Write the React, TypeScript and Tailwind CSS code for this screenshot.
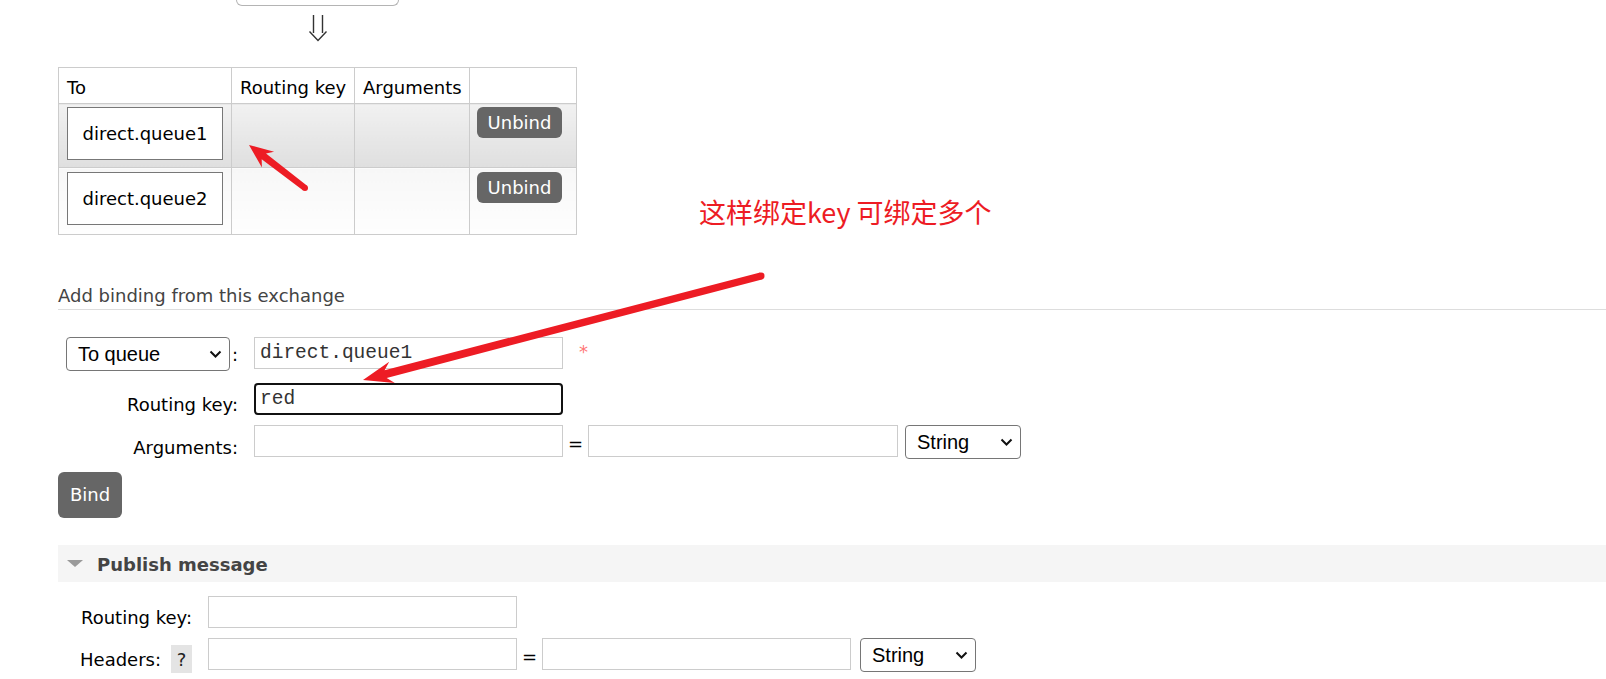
import React from 'react';

// annotation arrow: tapered shaft plus a notched head, as a polygon
function arrowPoints(tx: number, ty: number, px: number, py: number, headL: number, headW: number, tailW: number, neckW: number) {
  const dx = px - tx;
  const dy = py - ty;
  const len = Math.hypot(dx, dy);
  const ux = dx / len;
  const uy = dy / len;
  const nx = -uy;
  const ny = ux;
  const bx = px - ux * headL;
  const by = py - uy * headL;
  const kx = px - ux * headL * 0.78;
  const ky = py - uy * headL * 0.78;
  const pts = [
    [tx + nx * tailW, ty + ny * tailW],
    [kx + nx * neckW, ky + ny * neckW],
    [bx + nx * headW, by + ny * headW],
    [px, py],
    [bx - nx * headW, by - ny * headW],
    [kx - nx * neckW, ky - ny * neckW],
    [tx - nx * tailW, ty - ny * tailW],
  ];
  return pts.map((p) => p[0].toFixed(1) + ',' + p[1].toFixed(1)).join(' ');
}

function Chevron() {
  return (
    <svg width="13" height="8" viewBox="0 0 13 8">
      <path d="M1.5 1.5l5 5 5-5" fill="none" stroke="#111" strokeWidth="2" />
    </svg>
  );
}

function FakeSelect({ label, className }: { label: string; className: string }) {
  return (
    <div
      className={
        "flex h-[34px] items-center justify-between rounded-[4px] border border-[#767676] bg-white pl-[11px] pr-[7px] font-['Liberation_Sans',Arial,sans-serif] text-[20px] text-black " +
        className
      }
    >
      <span>{label}</span>
      <Chevron />
    </div>
  );
}

function TextBox({ value, className }: { value?: string; className: string }) {
  return (
    <input
      readOnly
      value={value || ''}
      className={
        "h-[32px] border border-[#cccccc] bg-white px-[5px] font-['Liberation_Mono','Courier_New',monospace] text-[19.5px] text-[#333] outline-none " +
        className
      }
    />
  );
}

function QueueCell({ name }: { name: string }) {
  return (
    <div className="flex h-[53px] w-[156px] items-center justify-center border border-[#777] bg-white">
      {name}
    </div>
  );
}

function UnbindButton() {
  return (
    <button className="flex h-[31px] w-[85px] items-center justify-center rounded-[6px] bg-[#666] text-white">
      Unbind
    </button>
  );
}

export default function App() {
  return (
    <div className="relative h-[679px] w-full overflow-hidden bg-white font-['DejaVu_Sans',Verdana,sans-serif] text-[18px] text-black">
      {/* exchange box (cut off at the top) */}
      <div className="ml-[236px] h-[6px] w-[163px] rounded-b-[9px] border-x border-b border-[#b4b4b4]" />
      <div className="ml-[236px] flex h-[43px] w-[163px] items-start justify-center pt-[9px]">
        <svg width="20" height="27" viewBox="0 0 20 27">
          <path d="M5.5 0v18M14.5 0v18M1.5 16.5l8.5 9 8.5-9" fill="none" stroke="#333" strokeWidth="1.4" />
        </svg>
      </div>

      {/* bindings table */}
      <table className="ml-[58px] mt-[18px] w-[518px] table-fixed border-collapse">
        <colgroup>
          <col className="w-[173px]" />
          <col className="w-[123px]" />
          <col className="w-[115px]" />
          <col className="w-[107px]" />
        </colgroup>
        <thead>
          <tr className="h-[36px]">
            <th className="whitespace-nowrap border border-[#cccccc] px-[8px] pt-[3px] text-left font-normal">To</th>
            <th className="whitespace-nowrap border border-[#cccccc] px-[8px] pt-[3px] text-left font-normal">Routing key</th>
            <th className="whitespace-nowrap border border-[#cccccc] px-[8px] pt-[3px] text-left font-normal">Arguments</th>
            <th className="border border-[#cccccc] px-[8px] text-left font-normal" />
          </tr>
        </thead>
        <tbody>
          <tr className="h-[64px]">
            <td className="border border-[#cccccc] bg-linear-to-b from-[#f1f1f1] to-[#dfdfdf] px-[8px] pt-[3px] align-top">
              <QueueCell name="direct.queue1" />
            </td>
            <td className="border border-[#cccccc] bg-linear-to-b from-[#f1f1f1] to-[#dfdfdf]" />
            <td className="border border-[#cccccc] bg-linear-to-b from-[#f1f1f1] to-[#dfdfdf]" />
            <td className="border border-[#cccccc] bg-linear-to-b from-[#f1f1f1] to-[#dfdfdf] px-[7px] pt-[3px] align-top">
              <UnbindButton />
            </td>
          </tr>
          <tr className="h-[67px]">
            <td className="border border-[#cccccc] bg-linear-to-b from-[#f7f7f7] to-[#fefefe] px-[8px] pt-[4px] align-top">
              <QueueCell name="direct.queue2" />
            </td>
            <td className="border border-[#cccccc] bg-linear-to-b from-[#f7f7f7] to-[#fefefe]" />
            <td className="border border-[#cccccc] bg-linear-to-b from-[#f7f7f7] to-[#fefefe]" />
            <td className="border border-[#cccccc] bg-linear-to-b from-[#f7f7f7] to-[#fefefe] px-[7px] pt-[4px] align-top">
              <UnbindButton />
            </td>
          </tr>
        </tbody>
      </table>

      {/* add binding */}
      <div className="ml-[58px] mt-[46px] flex h-[29px] items-center border-b border-[#dddddd] text-[#444]">
        Add binding from this exchange
      </div>

      <div className="pl-[58px]">
        <div className="mt-[27px] flex items-start">
          <div className="flex w-[180px] items-center justify-end gap-[2px]">
            <FakeSelect label="To queue" className="w-[164px]" />
            <span>:</span>
          </div>
          <TextBox value="direct.queue1" className="ml-[16px] w-[309px]" />
          <span className="ml-[16px] pt-[1px] text-[#f77]">*</span>
        </div>

        <div className="mt-[12px] flex items-start">
          <div className="w-[180px] pt-[11px] text-right leading-[1.2]">Routing key:</div>
          <input
            readOnly
            value="red"
            className="ml-[16px] h-[32px] w-[309px] rounded-[4px] border-2 border-[#111] bg-white px-[4px] font-['Liberation_Mono','Courier_New',monospace] text-[19.5px] text-[#333] outline-none"
          />
        </div>

        <div className="mt-[9px] flex items-start">
          <div className="w-[180px] pt-[12px] text-right leading-[1.2]">Arguments:</div>
          <TextBox className="ml-[16px] w-[309px]" />
          <span className="w-[25px] pt-[8px] text-center leading-[1.2]">=</span>
          <TextBox className="w-[310px]" />
          <FakeSelect label="String" className="ml-[7px] w-[116px]" />
        </div>

        <button className="mt-[13px] flex h-[46px] w-[64px] items-center justify-center rounded-[6px] bg-[#666] text-white">
          Bind
        </button>
      </div>

      {/* publish message */}
      <div className="ml-[58px] mt-[27px] flex h-[37px] items-center gap-[14px] bg-[#f5f5f5] pl-[9px] pt-[2px]">
        <svg width="16" height="8" viewBox="0 0 16 8">
          <polygon points="0,0 16,0 8,7" fill="#9a9a9a" />
        </svg>
        <span className="font-bold text-[#444]">Publish message</span>
      </div>

      <div className="pl-[58px]">
        <div className="mt-[14px] flex items-start">
          <div className="w-[134px] pt-[11px] text-right leading-[1.2]">Routing key:</div>
          <TextBox className="ml-[16px] w-[309px]" />
        </div>
        <div className="mt-[10px] flex items-start">
          <div className="flex w-[134px] items-start justify-end">
            <span className="pt-[11px] leading-[1.2]">Headers:</span>
            <span className="ml-[10px] mt-[7px] flex h-[28px] w-[21px] items-center justify-center bg-[#e4e4e4] text-[#222]">
              ?
            </span>
          </div>
          <TextBox className="ml-[16px] w-[309px]" />
          <span className="w-[25px] pt-[8px] text-center leading-[1.2]">=</span>
          <TextBox className="w-[309px]" />
          <FakeSelect label="String" className="ml-[9px] w-[116px]" />
        </div>
        <div className="mt-[10px] flex items-start">
          <div className="w-[134px]" />
          <TextBox className="ml-[16px] w-[309px]" />
          <span className="w-[25px]" />
          <TextBox className="w-[309px]" />
        </div>
      </div>

      {/* red annotations */}
      <div className="absolute left-[699px] top-[198px] whitespace-nowrap font-['Noto_Sans_CJK_SC','Noto_Sans',sans-serif] text-[27px] leading-none text-[#ed1c24]">
        这样绑定key 可绑定多个
      </div>
      <svg className="pointer-events-none absolute left-0 top-0" width="1606" height="679">
        <polygon points={arrowPoints(305, 188, 249, 145, 24, 10, 3, 3.5)} fill="#ed1c24" />
        <circle cx="305" cy="188" r="3" fill="#ed1c24" />
        <polygon points={arrowPoints(761, 276, 363, 380, 30, 11, 3.5, 4)} fill="#ed1c24" />
        <circle cx="761" cy="276" r="3.5" fill="#ed1c24" />
      </svg>
    </div>
  );
}
